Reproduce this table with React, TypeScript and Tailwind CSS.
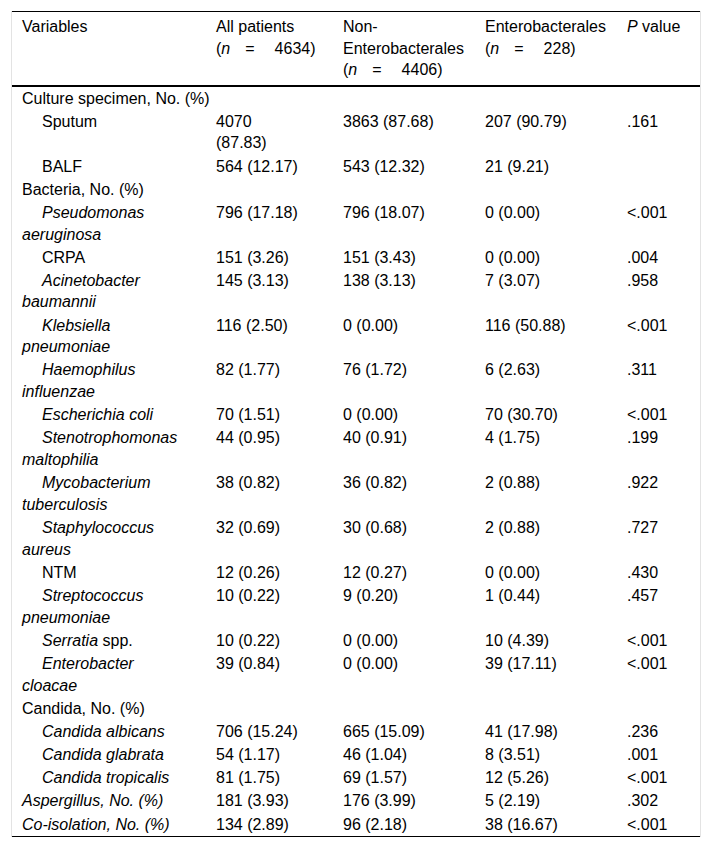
import React from "react";

type Row = {
  label: React.ReactNode;
  sub?: boolean;
  all?: React.ReactNode;
  non?: string;
  ent?: string;
  p?: string;
};

const N = ({ v }: { v: string }) => (
  <>
    (<i>n</i>
    <span className="ml-[15px] mr-[20px]">=</span>
    {v})
  </>
);

const rows: Row[] = [
  { label: "Culture specimen, No. (%)" },
  { label: "Sputum", sub: true, all: <>4070<br />(87.83)</>, non: "3863 (87.68)", ent: "207 (90.79)", p: ".161" },
  { label: "BALF", sub: true, all: "564 (12.17)", non: "543 (12.32)", ent: "21 (9.21)" },
  { label: "Bacteria, No. (%)" },
  { label: <i>Pseudomonas<br />aeruginosa</i>, sub: true, all: "796 (17.18)", non: "796 (18.07)", ent: "0 (0.00)", p: "<.001" },
  { label: "CRPA", sub: true, all: "151 (3.26)", non: "151 (3.43)", ent: "0 (0.00)", p: ".004" },
  { label: <i>Acinetobacter<br />baumannii</i>, sub: true, all: "145 (3.13)", non: "138 (3.13)", ent: "7 (3.07)", p: ".958" },
  { label: <i>Klebsiella<br />pneumoniae</i>, sub: true, all: "116 (2.50)", non: "0 (0.00)", ent: "116 (50.88)", p: "<.001" },
  { label: <i>Haemophilus<br />influenzae</i>, sub: true, all: "82 (1.77)", non: "76 (1.72)", ent: "6 (2.63)", p: ".311" },
  { label: <i>Escherichia coli</i>, sub: true, all: "70 (1.51)", non: "0 (0.00)", ent: "70 (30.70)", p: "<.001" },
  { label: <i>Stenotrophomonas<br />maltophilia</i>, sub: true, all: "44 (0.95)", non: "40 (0.91)", ent: "4 (1.75)", p: ".199" },
  { label: <i>Mycobacterium<br />tuberculosis</i>, sub: true, all: "38 (0.82)", non: "36 (0.82)", ent: "2 (0.88)", p: ".922" },
  { label: <i>Staphylococcus<br />aureus</i>, sub: true, all: "32 (0.69)", non: "30 (0.68)", ent: "2 (0.88)", p: ".727" },
  { label: "NTM", sub: true, all: "12 (0.26)", non: "12 (0.27)", ent: "0 (0.00)", p: ".430" },
  { label: <i>Streptococcus<br />pneumoniae</i>, sub: true, all: "10 (0.22)", non: "9 (0.20)", ent: "1 (0.44)", p: ".457" },
  { label: <><i>Serratia</i> spp.</>, sub: true, all: "10 (0.22)", non: "0 (0.00)", ent: "10 (4.39)", p: "<.001" },
  { label: <i>Enterobacter<br />cloacae</i>, sub: true, all: "39 (0.84)", non: "0 (0.00)", ent: "39 (17.11)", p: "<.001" },
  { label: "Candida, No. (%)" },
  { label: <i>Candida albicans</i>, sub: true, all: "706 (15.24)", non: "665 (15.09)", ent: "41 (17.98)", p: ".236" },
  { label: <i>Candida glabrata</i>, sub: true, all: "54 (1.17)", non: "46 (1.04)", ent: "8 (3.51)", p: ".001" },
  { label: <i>Candida tropicalis</i>, sub: true, all: "81 (1.75)", non: "69 (1.57)", ent: "12 (5.26)", p: "<.001" },
  { label: <i>Aspergillus, No. (%)</i>, all: "181 (3.93)", non: "176 (3.99)", ent: "5 (2.19)", p: ".302" },
  { label: <i>Co-isolation, No. (%)</i>, all: "134 (2.89)", non: "96 (2.18)", ent: "38 (16.67)", p: "<.001" },
];

const td = "align-top pl-[10px] py-[0.8px] whitespace-nowrap";
const th = "align-top text-left font-normal pl-[10px] pt-[4px] pb-[4px] border-b-2 border-black whitespace-nowrap";

export default function App() {
  return (
    <div className="min-h-screen bg-white pt-[11px] pl-[11px] font-['Liberation_Sans',Arial,sans-serif] text-[16px] leading-[21.6px] text-black">
      <div className="w-[690px] border-x border-[#e3e3e3]">
        <table className="w-[688px] table-fixed border-t border-b border-black">
          <colgroup>
            <col className="w-[194px]" />
            <col className="w-[127px]" />
            <col className="w-[142px]" />
            <col className="w-[142px]" />
            <col className="w-[83px]" />
          </colgroup>
          <thead>
            <tr>
              <th className={`${th} pl-[9px]`}>Variables</th>
              <th className={th}>
                All patients
                <br />
                <N v="4634" />
              </th>
              <th className={th}>
                Non-
                <br />
                Enterobacterales
                <br />
                <N v="4406" />
              </th>
              <th className={th}>
                Enterobacterales
                <br />
                <N v="228" />
              </th>
              <th className={th}>
                <i>P</i> value
              </th>
            </tr>
          </thead>
          <tbody>
            {rows.map((r, i) => (
              <tr key={i}>
                <td className={`${td} pl-[9px] ${r.sub ? "indent-5" : ""}`}>{r.label}</td>
                <td className={td}>{r.all}</td>
                <td className={td}>{r.non}</td>
                <td className={td}>{r.ent}</td>
                <td className={td}>{r.p}</td>
              </tr>
            ))}
          </tbody>
        </table>
      </div>
    </div>
  );
}
